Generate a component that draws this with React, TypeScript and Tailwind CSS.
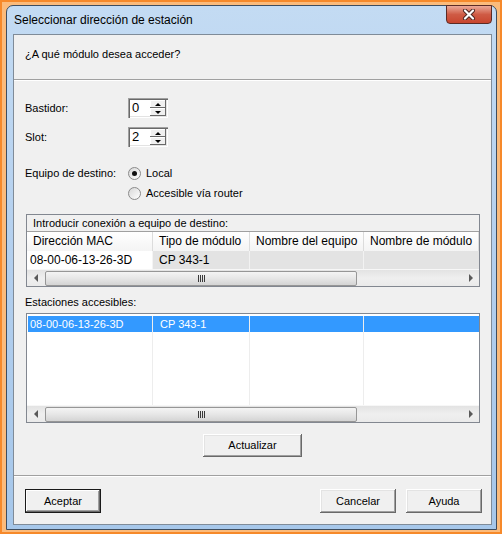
import React from 'react';

const COLS = ['w-[126px]', 'w-[97px]', 'w-[114px]', 'flex-1'];

function Tri({ dir }: { dir: 'left' | 'right' | 'up' | 'down' }) {
  if (dir === 'left') return <div className="w-0 h-0 border-y-[4px] border-y-transparent border-r-[4px] border-r-[#5a5a5a]" />;
  if (dir === 'right') return <div className="w-0 h-0 border-y-[4px] border-y-transparent border-l-[4px] border-l-[#5a5a5a]" />;
  if (dir === 'up') return <div className="w-0 h-0 border-x-[3px] border-x-transparent border-b-[3px] border-b-black" />;
  return <div className="w-0 h-0 border-x-[3px] border-x-transparent border-t-[3px] border-t-black" />;
}

function HScroll() {
  return (
    <div className="h-[17px] flex items-center bg-gradient-to-b from-[#e3e3e3] via-[#efefef] to-[#eaeaea] border-t border-[#f7f7f7]">
      <div className="w-[17px] h-full flex items-center justify-center">
        <Tri dir="left" />
      </div>
      <div className="ml-[1px] w-[312px] h-[15px] rounded-[2px] border border-[#969696] bg-gradient-to-b from-[#f4f4f4] via-[#e6e6e6] to-[#d4d4d4] flex items-center justify-center gap-[1px]">
        {[0, 1, 2, 3].map(i => (
          <div key={i} className="w-[1px] h-[7px] bg-[#3a3a3a]" />
        ))}
      </div>
      <div className="flex-1" />
      <div className="w-[17px] h-full flex items-center justify-center">
        <Tri dir="right" />
      </div>
    </div>
  );
}

function Spin({ value }: { value: string }) {
  return (
    <div className="w-[40px] h-[20px] flex bg-white shadow-[inset_1px_1px_0_#a0a0a0,inset_2px_2px_0_#696969,inset_-1px_-1px_0_#ffffff,inset_-2px_-2px_0_#e3e3e3]">
      <div className="flex-1 pl-[4px] pt-[3px] text-[13px] leading-[14px] text-black">{value}</div>
      <div className="w-[16px] my-[2px] mr-[2px] flex flex-col">
        <div className="flex-1 bg-[#f0f0f0] flex items-center justify-center shadow-[inset_-1px_-1px_0_#696969,inset_1px_1px_0_#ffffff]">
          <Tri dir="up" />
        </div>
        <div className="flex-1 bg-[#f0f0f0] flex items-center justify-center shadow-[inset_-1px_-1px_0_#696969,inset_1px_1px_0_#ffffff]">
          <Tri dir="down" />
        </div>
      </div>
    </div>
  );
}

function Radio({ checked, label }: { checked?: boolean; label: string }) {
  return (
    <div className="h-[16px] flex items-center">
      <div className="w-[13px] h-[13px] rounded-full border border-[#8a8a8a] bg-gradient-to-br from-[#d8d8d8] to-white flex items-center justify-center">
        {checked && <div className="w-[5px] h-[5px] rounded-full bg-[#111]" />}
      </div>
      <span className="ml-[5px]">{label}</span>
    </div>
  );
}

function WinButton({ label, w, h, isDefault }: { label: string; w: string; h: string; isDefault?: boolean }) {
  return (
    <div
      className={`${w} ${h} flex items-center justify-center bg-[#f0f0f0] text-black ${
        isDefault
          ? 'border border-[#1a1a1a] shadow-[inset_-1px_-1px_0_#696969,inset_1px_1px_0_#ffffff,inset_-2px_-2px_0_#a0a0a0]'
          : 'shadow-[inset_-1px_-1px_0_#696969,inset_1px_1px_0_#ffffff,inset_-2px_-2px_0_#a0a0a0,inset_2px_2px_0_#e3e3e3]'
      }`}
    >
      {label}
    </div>
  );
}

export default function App() {
  return (
    <div className="w-[502px] h-[534px] bg-[#f6892a] p-[2px]">
      <div className="h-full bg-[#fbbb7c] pt-[3px] pb-[2px] pl-[4px] pr-[3px]">
        <div className="h-full flex flex-col rounded-t-[7px] border border-[#3f4d5e] bg-gradient-to-b from-[#c3dbf3] via-[#b3cfee] to-[#a6c7ea] pl-[6px] pr-[4px] pb-[4px] font-['Liberation_Sans',Arial,sans-serif]">
          {/* title bar */}
          <div className="h-[28px] flex items-start justify-between">
            <div className="pl-[1px] h-full flex items-center text-[12px] text-black">Seleccionar dirección de estación</div>
            <div className="-mt-px w-[46px] h-[19px] rounded-b-[4px] border border-[#5b2b25] bg-gradient-to-b from-[#e9a898] via-[#cf5b45] to-[#c8452e] flex items-center justify-center">
              <svg width="14" height="11" viewBox="0 0 14 11">
                <path d="M3 1.5 L11 9.5 M11 1.5 L3 9.5" stroke="#4a2420" strokeWidth="4" strokeLinecap="round" />
                <path d="M3 1.5 L11 9.5 M11 1.5 L3 9.5" stroke="#ffffff" strokeWidth="2.2" strokeLinecap="round" />
              </svg>
            </div>
          </div>

          {/* client area */}
          <div className="flex-1 flex flex-col border border-[#7f8b98] bg-[#f0f0f0] text-[11px] leading-[13px] text-black">
            <div className="h-[44px] pt-[13px] pl-[11px]">¿A qué módulo desea acceder?</div>
            <div className="h-[1px] bg-[#a0a0a0]" />
            <div className="h-[1px] bg-white" />

            <div className="pl-[11px] mt-[17px] flex items-center">
              <span className="w-[103px]">Bastidor:</span>
              <Spin value="0" />
            </div>
            <div className="pl-[11px] mt-[9px] flex items-center">
              <span className="w-[103px]">Slot:</span>
              <Spin value="2" />
            </div>

            <div className="pl-[11px] mt-[18px] flex items-start">
              <span className="w-[103px] h-[16px] flex items-center">Equipo de destino:</span>
              <div className="flex flex-col gap-[4px]">
                <Radio checked label="Local" />
                <Radio label="Accesible vía router" />
              </div>
            </div>

            {/* connection table */}
            <div className="mt-[13px] ml-[12px] w-[454px] border border-[#828790] flex flex-col bg-white">
              <div className="h-[17px] pl-[6px] flex items-center bg-[#f0f0f0] border-b border-[#a0a0a0]">
                Introducir conexión a equipo de destino:
              </div>
              <div className="h-[19px] flex text-[12px] bg-gradient-to-b from-white to-[#f4f4f4]">
                {['Dirección MAC', 'Tipo de módulo', 'Nombre del equipo', 'Nombre de módulo'].map((t, i) => (
                  <div key={t} className={`${COLS[i]} pl-[6px] flex items-center border-r border-[#dcdcdc] whitespace-nowrap overflow-hidden`}>
                    {t}
                  </div>
                ))}
              </div>
              <div className="h-[18px] flex text-[12px]">
                <div className="w-[126px] pl-[3px] flex items-center bg-white border-r border-[#f4f4f4]">08-00-06-13-26-3D</div>
                <div className="w-[97px] pl-[6px] flex items-center bg-[#e3e3e3] border-r border-[#f2f2f2]">CP 343-1</div>
                <div className="w-[114px] bg-[#e3e3e3] border-r border-[#f2f2f2]" />
                <div className="flex-1 bg-[#e3e3e3]" />
              </div>
              <HScroll />
            </div>

            <div className="pl-[11px] mt-[9px]">Estaciones accesibles:</div>

            {/* accessible stations list */}
            <div className="mt-[4px] ml-[12px] w-[454px] h-[110px] border border-[#828790] flex flex-col bg-white">
              <div className="flex-1 flex pt-[2px] pl-[1px]">
                {[0, 1, 2, 3].map(i => (
                  <div key={i} className={`${i === 0 ? 'w-[125px]' : COLS[i]} h-full ${i < 3 ? 'border-r border-[#ededed]' : ''}`}>
                    <div className="h-[16px] bg-[#3399ff] text-white flex items-center">
                      {i === 0 && <span className="pl-[2px]">08-00-06-13-26-3D</span>}
                      {i === 1 && <span className="pl-[7px]">CP 343-1</span>}
                    </div>
                  </div>
                ))}
              </div>
              <HScroll />
            </div>

            <div className="mt-[11px] flex justify-center">
              <WinButton label="Actualizar" w="w-[99px]" h="h-[23px]" />
            </div>

            <div className="mt-[18px] h-[1px] bg-[#a0a0a0]" />
            <div className="h-[1px] bg-white" />

            <div className="mt-[12px] pl-[11px] pr-[9px] flex items-center">
              <WinButton label="Aceptar" w="w-[76px]" h="h-[24px]" isDefault />
              <div className="flex-1" />
              <WinButton label="Cancelar" w="w-[76px]" h="h-[24px]" />
              <div className="w-[10px]" />
              <WinButton label="Ayuda" w="w-[76px]" h="h-[24px]" />
            </div>
          </div>
        </div>
      </div>
    </div>
  );
}
